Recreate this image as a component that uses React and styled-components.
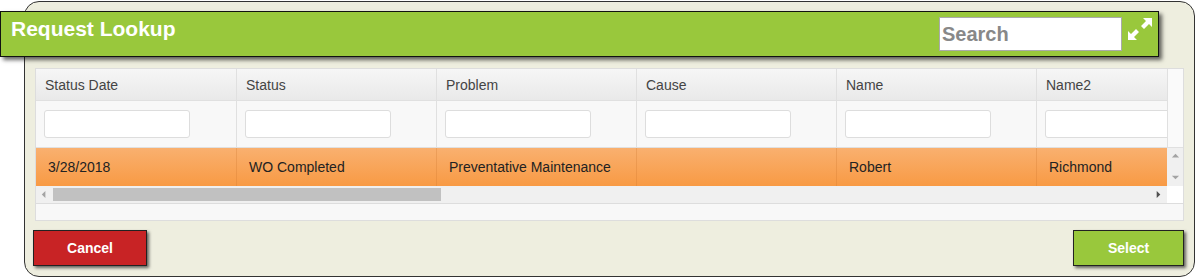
import React from "react";
import styled, { createGlobalStyle } from "styled-components";

const GlobalStyle = createGlobalStyle`
    body {
        margin: 0;
        background: #ffffff;
        font-family: "Liberation Sans", Arial, sans-serif;
    }
`;

const Panel = styled.div`
    box-sizing: border-box;
    margin: 1px 0 0 24px;
    width: 1171px;
    height: 276px;
    padding: 9px 10px 9px 10px;
    background: #eeeedf;
    border: 1px solid #333;
    border-radius: 15px;
    display: flex;
    flex-direction: column;
`;

const TitleBar = styled.div`
    box-sizing: border-box;
    margin-left: -35px;
    width: 1159px;
    height: 46px;
    flex-shrink: 0;
    display: flex;
    align-items: flex-start;
    padding: 0 6px 0 10px;
    background: #99c83c;
    border: 1px solid #111;
    box-shadow: 3px 3px 4px rgba(0, 0, 0, 0.6);
`;

const Title = styled.h1`
    margin: 5px 0 0 0;
    font-size: 21px;
    line-height: 24px;
    font-weight: bold;
    color: #ffffff;
    flex: 1;
`;

const SearchBox = styled.input`
    box-sizing: border-box;
    margin-top: 5px;
    width: 183px;
    height: 34px;
    padding: 0 2px;
    border: 1px solid #aaa;
    background: #fff;
    font-family: "Liberation Sans", Arial, sans-serif;
    font-size: 20px;
    font-weight: bold;
    color: #555;
    outline: none;

    &::placeholder {
        color: #888;
    }
`;

const ExpandButton = styled.span`
    margin: 5px 0 0 6px;
    width: 24px;
    height: 24px;
    display: block;
`;

const Grid = styled.div`
    margin-top: 11px;
    border: 1px solid #ddd;
    background: #f8f8f8;
    display: flex;
    flex-direction: column;
`;

const GridTop = styled.div`
    display: flex;
`;

const Viewport = styled.div`
    width: 1132px;
    overflow: hidden;
`;

const Row = styled.div`
    display: flex;
    height: ${(p) => p.h}px;
    border-bottom: ${(p) => (p.line ? "1px solid #e0e0e0" : "none")};
    background: ${(p) => p.bg || "transparent"};
`;

const Cell = styled.div`
    box-sizing: border-box;
    flex: 0 0 200px;
    display: flex;
    align-items: center;
    padding-left: ${(p) => p.pad || 9}px;
    border-right: 1px solid ${(p) => p.divider || "#e0e0e0"};
    font-size: 14px;
    color: ${(p) => p.color || "#444"};
    white-space: nowrap;

    &:first-child {
        flex-basis: 201px;
    }
`;

const FilterInput = styled.input`
    box-sizing: border-box;
    width: 146px;
    height: 28px;
    margin-left: -1px;
    border: 1px solid #ddd;
    border-radius: 3px;
    background: #fff;
`;

const HScroll = styled.div`
    height: 17px;
    background: #f0f0f0;
    display: flex;
    align-items: center;
`;

const ArrowBox = styled.div`
    width: 17px;
    height: 17px;
    display: flex;
    align-items: center;
    justify-content: center;
    flex-shrink: 0;
`;

const Thumb = styled.div`
    width: 388px;
    height: 13px;
    background: #c1c1c1;
`;

const Track = styled.div`
    flex: 1;
`;

const Gutter = styled.div`
    width: 16px;
    display: flex;
    flex-direction: column;
`;

const GutterBlank = styled.div`
    height: 79px;
    background: #fafafa;
    border-left: 1px solid #e0e0e0;
    border-bottom: 1px solid #e0e0e0;
    box-sizing: border-box;
`;

const VScroll = styled.div`
    height: 38px;
    background: #f0f0f0;
    display: flex;
    flex-direction: column;
    justify-content: space-between;
    align-items: center;
    padding: 4px 0;
    box-sizing: border-box;
`;

const Corner = styled.div`
    height: 17px;
    background: #fff;
`;

const GridFooter = styled.div`
    height: 16px;
    border-top: 1px solid #ddd;
    background: #f8f8f8;
`;

const Buttons = styled.div`
    margin-top: 9px;
    display: flex;
    justify-content: space-between;
`;

const Button = styled.button`
    box-sizing: border-box;
    margin-left: ${(p) => p.offset || 0}px;
    width: ${(p) => p.w}px;
    height: 36px;
    background: ${(p) => p.bg};
    border: 1px solid #222;
    box-shadow: 2px 2px 3px rgba(0, 0, 0, 0.6);
    color: #fff;
    font-family: "Liberation Sans", Arial, sans-serif;
    font-size: 14px;
    font-weight: bold;
    cursor: pointer;
`;

const Tri = ({ dir, color }) => {
    const pts = {
        left: "6,1 6,9 2,5",
        right: "3,1 3,9 7,5",
        up: "1,6 9,6 5,2",
        down: "1,3 9,3 5,7",
    };
    return (
        <svg width="9" height="9" viewBox="0 0 10 10">
            <polygon points={pts[dir]} fill={color} />
        </svg>
    );
};

const ExpandIcon = () => (
    <svg width="24" height="24" viewBox="0 0 24 24">
        <polygon points="24,1 15,1 18,4 13,9 16,12 21,7 24,10" fill="#fff" />
        <polygon points="0,23 9,23 6,20 11,15 8,12 3,17 0,14" fill="#fff" />
    </svg>
);

const columns = ["Status Date", "Status", "Problem", "Cause", "Name", "Name2"];
const record = ["3/28/2018", "WO Completed", "Preventative Maintenance", "", "Robert", "Richmond"];

const App = () => {
    return (
        <>
            <GlobalStyle />
            <Panel>
                <TitleBar>
                    <Title>Request Lookup</Title>
                    <SearchBox placeholder="Search" />
                    <ExpandButton>
                        <ExpandIcon />
                    </ExpandButton>
                </TitleBar>
                <Grid>
                    <GridTop>
                        <Viewport>
                            <Row h={31} line bg="linear-gradient(#f6f6f6, #e9e9e9)">
                                {columns.map((c) => (
                                    <Cell key={c}>{c}</Cell>
                                ))}
                            </Row>
                            <Row h={46} line bg="#f8f8f8">
                                {columns.map((c) => (
                                    <Cell key={c} pad={9}>
                                        <FilterInput />
                                    </Cell>
                                ))}
                            </Row>
                            <Row h={38} bg="linear-gradient(#f9b06f, #f89a44)">
                                {record.map((v, i) => (
                                    <Cell key={i} pad={12} color="#222" divider="rgba(200, 110, 40, 0.25)">
                                        {v}
                                    </Cell>
                                ))}
                            </Row>
                            <HScroll>
                                <ArrowBox>
                                    <Tri dir="left" color="#a3a3a3" />
                                </ArrowBox>
                                <Thumb />
                                <Track />
                                <ArrowBox>
                                    <Tri dir="right" color="#505050" />
                                </ArrowBox>
                            </HScroll>
                        </Viewport>
                        <Gutter>
                            <GutterBlank />
                            <VScroll>
                                <Tri dir="up" color="#a3a3a3" />
                                <Tri dir="down" color="#a3a3a3" />
                            </VScroll>
                            <Corner />
                        </Gutter>
                    </GridTop>
                    <GridFooter />
                </Grid>
                <Buttons>
                    <Button bg="#c82325" w={114} offset={-2}>Cancel</Button>
                    <Button bg="#99c83c" w={111}>Select</Button>
                </Buttons>
            </Panel>
        </>
    );
};

export default App;
